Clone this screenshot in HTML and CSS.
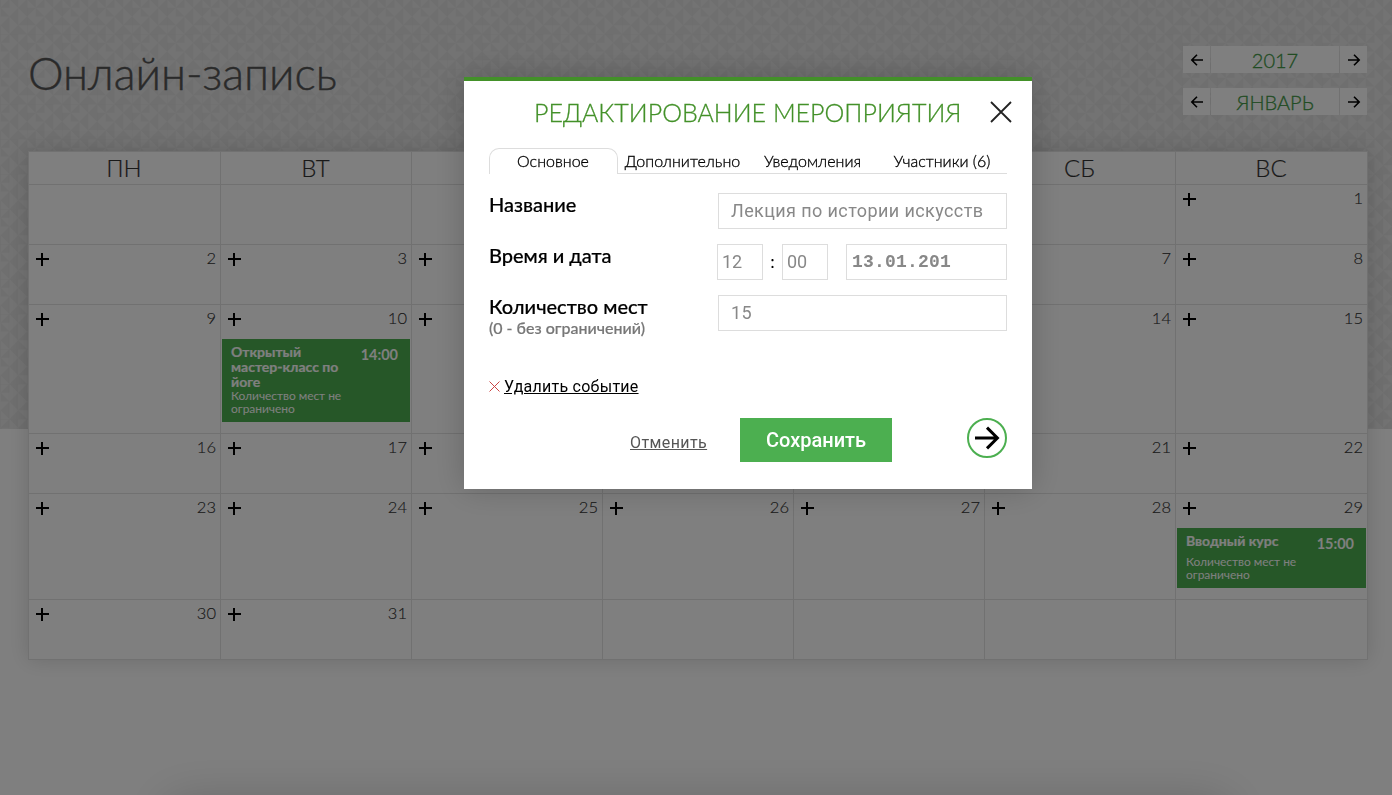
FILE: index.html
```html
<!DOCTYPE html>
<html lang="ru">
<head>
  <meta charset="UTF-8" />
  <title>Онлайн-запись</title>
  <link rel="stylesheet" href="styles.css">
</head>
<body>
  <svg class="sprite" aria-hidden="true">
    <symbol id="arrow-right" viewBox="0 0 14 14">
      <path d="M1 7H12M7 1.8L12.2 7L7 12.2" />
    </symbol>
    <symbol id="arrow-left" viewBox="0 0 14 14">
      <path d="M13 7H2M7 1.8L1.8 7L7 12.2" />
    </symbol>
    <symbol id="cross" viewBox="0 0 22 22">
      <path d="M1 1L21 21M21 1L1 21" />
    </symbol>
  </svg>

  <!-- Calendar page -->
  <div class="page">
    <header class="page-header">
      <h1 class="page-title">Онлайн-запись</h1>
      <div class="period">
        <div class="switcher">
          <div class="switcher-btn"><svg class="icon"><use href="#arrow-left" /></svg></div>
          <div class="switcher-value">2017</div>
          <div class="switcher-btn"><svg class="icon"><use href="#arrow-right" /></svg></div>
        </div>
        <div class="switcher">
          <div class="switcher-btn"><svg class="icon"><use href="#arrow-left" /></svg></div>
          <div class="switcher-value">ЯНВАРЬ</div>
          <div class="switcher-btn"><svg class="icon"><use href="#arrow-right" /></svg></div>
        </div>
      </div>
    </header>

    <div class="calendar">
      <div class="weekday">ПН</div>
      <div class="weekday">ВТ</div>
      <div class="weekday">СР</div>
      <div class="weekday">ЧТ</div>
      <div class="weekday">ПТ</div>
      <div class="weekday">СБ</div>
      <div class="weekday">ВС</div>

      <div class="day"></div>
      <div class="day"></div>
      <div class="day"></div>
      <div class="day"></div>
      <div class="day"></div>
      <div class="day"></div>
      <div class="day"><i class="add"></i><span class="num">1</span></div>

      <div class="day"><i class="add"></i><span class="num">2</span></div>
      <div class="day"><i class="add"></i><span class="num">3</span></div>
      <div class="day"><i class="add"></i><span class="num">4</span></div>
      <div class="day"><i class="add"></i><span class="num">5</span></div>
      <div class="day"><i class="add"></i><span class="num">6</span></div>
      <div class="day"><i class="add"></i><span class="num">7</span></div>
      <div class="day"><i class="add"></i><span class="num">8</span></div>

      <div class="day"><i class="add"></i><span class="num">9</span></div>
      <div class="day">
        <i class="add"></i><span class="num">10</span>
        <div class="event">
          <div class="event-info">
            <div class="event-name">Открытый <span class="nowrap">мастер-класс</span> по йоге</div>
            <div class="event-places">Количество мест не ограничено</div>
          </div>
          <div class="event-time">14:00</div>
        </div>
      </div>
      <div class="day"><i class="add"></i><span class="num">11</span></div>
      <div class="day"><i class="add"></i><span class="num">12</span></div>
      <div class="day"><i class="add"></i><span class="num">13</span></div>
      <div class="day"><i class="add"></i><span class="num">14</span></div>
      <div class="day"><i class="add"></i><span class="num">15</span></div>

      <div class="day"><i class="add"></i><span class="num">16</span></div>
      <div class="day"><i class="add"></i><span class="num">17</span></div>
      <div class="day"><i class="add"></i><span class="num">18</span></div>
      <div class="day"><i class="add"></i><span class="num">19</span></div>
      <div class="day"><i class="add"></i><span class="num">20</span></div>
      <div class="day"><i class="add"></i><span class="num">21</span></div>
      <div class="day"><i class="add"></i><span class="num">22</span></div>

      <div class="day"><i class="add"></i><span class="num">23</span></div>
      <div class="day"><i class="add"></i><span class="num">24</span></div>
      <div class="day"><i class="add"></i><span class="num">25</span></div>
      <div class="day"><i class="add"></i><span class="num">26</span></div>
      <div class="day"><i class="add"></i><span class="num">27</span></div>
      <div class="day"><i class="add"></i><span class="num">28</span></div>
      <div class="day">
        <i class="add"></i><span class="num">29</span>
        <div class="event">
          <div class="event-info">
            <div class="event-name short">Вводный курс</div>
            <div class="event-places">Количество мест не ограничено</div>
          </div>
          <div class="event-time">15:00</div>
        </div>
      </div>

      <div class="day"><i class="add"></i><span class="num">30</span></div>
      <div class="day"><i class="add"></i><span class="num">31</span></div>
      <div class="day"></div>
      <div class="day"></div>
      <div class="day"></div>
      <div class="day"></div>
      <div class="day"></div>
    </div>

    <footer class="page-footer"></footer>
  </div>

  <!-- Edit event popup -->
  <div class="overlay">
    <div class="modal">
      <div class="modal-header">
        <h2 class="modal-title">РЕДАКТИРОВАНИЕ МЕРОПРИЯТИЯ</h2>
        <svg class="modal-close"><use href="#cross" /></svg>
      </div>

      <div class="tabs">
        <div class="tab active">Основное</div>
        <div class="tab">Дополнительно</div>
        <div class="tab">Уведомления</div>
        <div class="tab">Участники (6)</div>
      </div>

      <div class="row">
        <div class="row-label">Название</div>
        <div class="field">Лекция по истории искусств</div>
      </div>
      <div class="row">
        <div class="row-label">Время и дата</div>
        <div class="datetime">
          <div class="field small">12</div>
          <span class="colon">:</span>
          <div class="field small">00</div>
          <div class="field date">13.01.201</div>
        </div>
      </div>
      <div class="row">
        <div class="row-label">
          Количество мест
          <div class="hint">(0 - без ограничений)</div>
        </div>
        <div class="field">15</div>
      </div>

      <div class="delete">
        <svg class="delete-icon"><use href="#cross" /></svg>
        <a class="delete-link">Удалить событие</a>
      </div>

      <div class="actions">
        <a class="cancel">Отменить</a>
        <div class="save">Сохранить</div>
        <div class="next"><svg class="next-icon"><use href="#arrow-right" /></svg></div>
      </div>
    </div>
  </div>
</body>
</html>
```
FILE: styles.css
```css
/* ====== Basic Page Setup ====== */
* {
  box-sizing: border-box;
}
body {
  margin: 0;
  height: 795px;
  overflow: hidden;
  background: #fff;
  font-family: Lato, sans-serif;
  color: #000;
}
.sprite {
  display: none;
}
.nowrap {
  white-space: nowrap;
}

/* ====== Page ====== */
.page {
  position: relative;
  height: 795px;
  overflow: hidden;
  padding: 0 24px 0 28px;
  /* triangle texture behind the top part */
  background: url("data:image/svg+xml,%3Csvg xmlns='http://www.w3.org/2000/svg' width='35' height='35' viewBox='0 0 4 4'%3E%3Cpath fill='%23e6e6e6' d='M0 0H4V4H0z'/%3E%3Cpath fill='%23dedede' d='M0 0L1 0L1 1zM2 0L2 1L1 1zM3 0L3 1L2 0zM4 0L3 1L4 1zM0 1L1 1L0 2zM1 1L2 2L1 2zM3 1L2 2L3 2zM3 1L4 2L4 1zM0 2L1 3L0 3zM2 2L1 3L2 3zM2 2L3 2L3 3zM4 2L3 3L4 3zM1 3L0 4L1 4zM1 3L2 3L2 4zM3 3L2 4L3 4zM3 3L4 4L3 4z'/%3E%3Cpath stroke='%23dadada' stroke-width='.07' d='M0 0H4M0 0V4'/%3E%3C/svg%3E") 27px -1px / 35px 35px;
}
.page::before {
  content: "";
  position: absolute;
  left: 0;
  right: 0;
  top: 429px;
  bottom: 0;
  background: #fff;
}
.page-header {
  display: flex;
  justify-content: space-between;
  height: 151px;
}
.page-title {
  margin: 46px 0 0;
  font-size: 45px;
  line-height: 55px;
  font-weight: 300;
  -webkit-text-stroke: 0.4px;
  color: #555;
}
.period {
  padding: 46px 1px 0 0;
}
.switcher {
  display: flex;
  gap: 1px;
  width: 184px;
  height: 27px;
  margin-bottom: 15px;
}
.switcher-btn {
  display: flex;
  align-items: center;
  justify-content: center;
  width: 27px;
  background: #fff;
}
.switcher-value {
  flex: 1;
  background: #fff;
  color: #439947;
  font-size: 20px;
  font-weight: 300;
  line-height: 28px;
  text-align: center;
  -webkit-text-stroke: 0.3px;
}
.icon {
  width: 14px;
  height: 14px;
  fill: none;
  stroke: #000;
  stroke-width: 1.6;
}

/* ====== Calendar ====== */
.calendar {
  position: relative;
  display: grid;
  grid-template-columns: 192px repeat(5, 191px) 192px;
  grid-template-rows: 33px 60px 60px 129px 60px 106px 60px;
  width: 1340px;
  background: #fff;
  border-right: 1px solid #e2e2e2;
  border-bottom: 1px solid #e2e2e2;
  box-shadow: 0 0 20px rgba(0, 0, 0, 0.15);
}
.weekday,
.day {
  border-top: 1px solid #e2e2e2;
  border-left: 1px solid #e2e2e2;
}
.weekday {
  padding-right: 1px;
  font-size: 24px;
  font-weight: 300;
  line-height: 32px;
  text-align: center;
  -webkit-text-stroke: 0.2px;
  color: #333;
}
.day {
  display: flex;
  flex-wrap: wrap;
  align-content: flex-start;
  justify-content: space-between;
  padding: 4px 4px 0 6.5px;
}
.num {
  font-size: 16.5px;
  font-weight: 300;
  line-height: 19px;
  -webkit-text-stroke: 0.15px;
  color: #333;
}
/* plus sign made of two bars */
.add {
  width: 13px;
  height: 13px;
  margin-top: 4px;
  background:
    linear-gradient(#000, #000) 0 5px / 13px 2px no-repeat,
    linear-gradient(#000, #000) 5px 0 / 2px 13px no-repeat;
}

/* ====== Event card ====== */
.event {
  display: flex;
  justify-content: space-between;
  width: calc(100% + 8.5px);
  min-height: 60px;
  margin: 11px -3px 0 -5.5px;
  padding: 5px 12px 7px 9px;
  background: #4caf50;
  color: #fff;
}
.event-info {
  width: 120px;
}
.event-name {
  font-size: 14px;
  font-weight: 700;
  line-height: 15px;
  -webkit-text-stroke: 0.2px;
}
.event-name.short {
  margin-bottom: 7px;
}
.event-places {
  font-size: 12px;
  line-height: 13px;
  letter-spacing: -0.05px;
}
.event-time {
  padding-top: 2px;
  font-size: 14.5px;
  font-weight: 700;
  line-height: 18px;
}

.page-footer {
  position: relative;
  height: 60px;
  margin: 142px 140px 0;
  box-shadow: 0 0 50px rgba(0, 0, 0, 0.2);
}

/* ====== Popup ====== */
.overlay {
  position: fixed;
  inset: 0;
  display: flex;
  justify-content: center;
  align-items: flex-start;
  padding: 77px 0 0 104px;
  background: rgba(0, 0, 0, 0.5);
}
.modal {
  width: 568px;
  height: 412px;
  padding: 0 25px;
  background: #fff;
  border-top: 4px solid #439129;
  box-shadow: 0 0 30px rgba(0, 0, 0, 0.2);
}
.modal-header {
  display: flex;
  align-items: center;
  height: 67px;
  padding: 0 0 5px 45px;
}
.modal-title {
  flex: none;
  width: 456px;
  margin: 0;
  font-size: 25px;
  font-weight: 300;
  -webkit-text-stroke: 0.3px;
  color: #439129;
  white-space: nowrap;
}
.modal-close {
  flex: none;
  width: 22px;
  height: 22px;
  fill: none;
  stroke: #222;
  stroke-width: 1.8;
}

/* ====== Tabs ====== */
.tabs {
  display: grid;
  grid-template-columns: 129px 130px 130px 129px;
  height: 26px;
}
.tab {
  padding-right: 1px;
  border-bottom: 1px solid #ddd;
  font-size: 16px;
  font-weight: 300;
  line-height: 25px;
  text-align: center;
  white-space: nowrap;
  -webkit-text-stroke: 0.3px;
}
.tab.active {
  border: 1px solid #ddd;
  border-bottom: none;
  border-radius: 10px 10px 0 0;
  line-height: 24px;
}

/* ====== Form ====== */
.row {
  display: flex;
  justify-content: space-between;
  height: 51px;
}
.tabs + .row {
  margin-top: 19px;
}
.row-label {
  margin-top: -1px;
  font-size: 20px;
  font-weight: 500;
  line-height: 24px;
  white-space: nowrap;
  -webkit-text-stroke: 0.2px;
}
.field {
  width: 289px;
  height: 36px;
  padding-left: 12px;
  border: 1px solid #ddd;
  font-family: Roboto, sans-serif;
  font-size: 18px;
  line-height: 34px;
  letter-spacing: 0.4px;
  color: #888;
  white-space: nowrap;
}
.datetime {
  display: flex;
  width: 290px;
}
.field.small {
  width: 46px;
  padding-left: 4px;
  letter-spacing: 0;
}
.colon {
  width: 19px;
  text-align: center;
  font-size: 18px;
  line-height: 34px;
}
.field.date {
  width: 161px;
  margin-left: 18px;
  padding-left: 5px;
  font-family: "Liberation Mono", monospace;
  font-weight: 700;
  letter-spacing: 0.2px;
}
.hint {
  font-size: 16px;
  line-height: 20px;
  color: #777;
}

/* ====== Delete and actions ====== */
.delete {
  display: flex;
  align-items: center;
  gap: 4px;
  height: 24px;
  margin-top: 28px;
}
.delete-icon {
  width: 11px;
  height: 11px;
  fill: none;
  stroke: #c44;
  stroke-width: 2;
}
.delete-link,
.cancel {
  font-family: Roboto, sans-serif;
  font-size: 16px;
  letter-spacing: 0.25px;
  text-decoration: underline;
}
.actions {
  display: flex;
  margin-top: 20px;
}
.cancel {
  width: 78px;
  margin-left: 141px;
  line-height: 49px;
  letter-spacing: 0.4px;
  color: #555;
}
.save {
  width: 152px;
  height: 44px;
  margin-left: 32px;
  background: #4caf50;
  color: #fff;
  font-family: Roboto, sans-serif;
  font-size: 20px;
  font-weight: 500;
  line-height: 44px;
  text-align: center;
}
.next {
  display: flex;
  align-items: center;
  justify-content: center;
  width: 40px;
  height: 40px;
  margin-left: 75px;
  border: 2px solid #4caf50;
  border-radius: 50%;
}
.next-icon {
  flex: none;
  width: 28px;
  height: 28px;
  fill: none;
  stroke: #000;
  stroke-width: 1.5;
}
```
